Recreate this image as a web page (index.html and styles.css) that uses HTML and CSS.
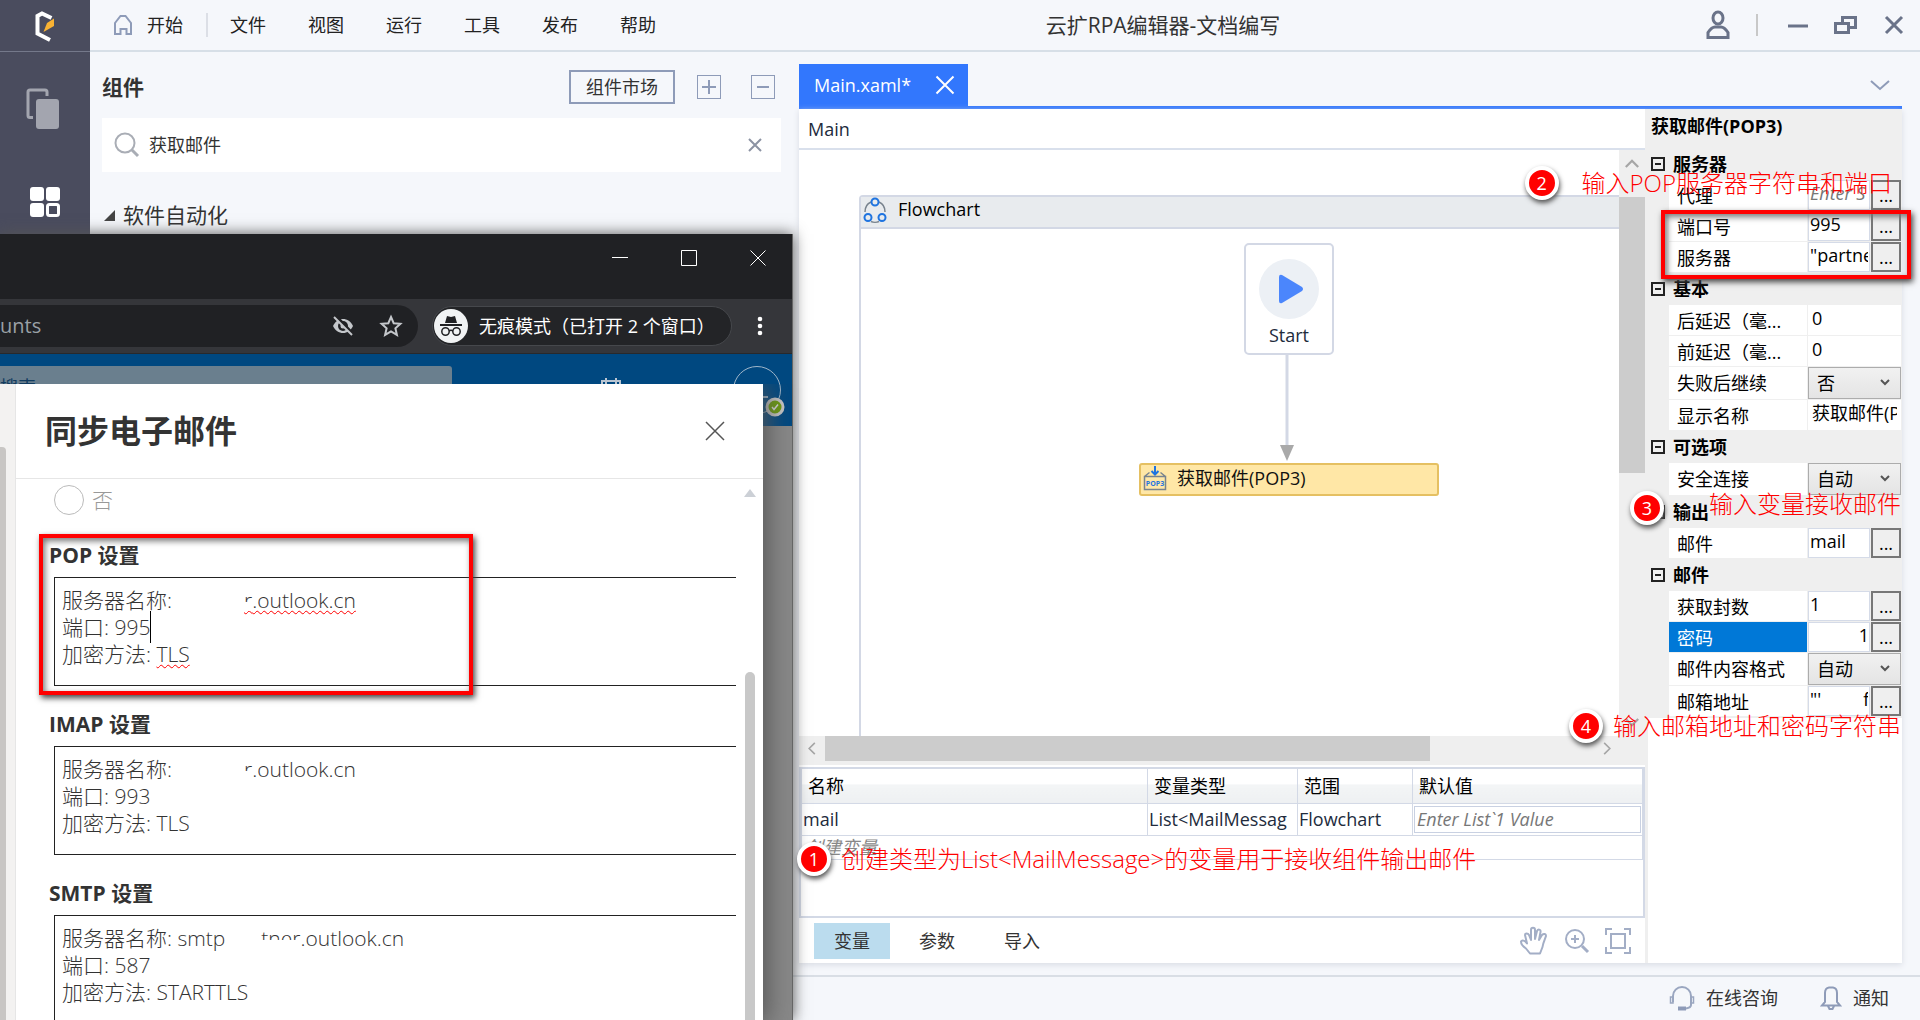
FILE: index.html
```html
<!DOCTYPE html>
<html lang="zh-CN">
<head>
<meta charset="utf-8">
<title>云扩RPA编辑器-文档编写</title>
<link rel="stylesheet" href="styles.css">
</head>
<body>
<div class="app">
  <aside class="rail">
    <div class="rail-logo">
      <svg width="22" height="34" viewBox="0 0 22 34"><path d="M17.500 8L8 3.500 3.500 6v17.500L16 30" fill="none" stroke="#fff" stroke-width="4"/><path d="M20 8.500V16L9.500 22l3.500-9z" fill="#f9b233"/></svg>
    </div>
    <button class="rail-btn" aria-label="文件">
      <svg width="34" height="42" viewBox="0 0 34 42"><path d="M7 29.500H4a2 2 0 0 1-2-2V4a2 2 0 0 1 2-2h15a2 2 0 0 1 2 2v4" fill="none" stroke="#a3a5af" stroke-width="3"/><rect x="10" y="11" width="23" height="30" rx="3" fill="#a3a5af"/></svg>
    </button>
    <button class="rail-btn" aria-label="组件">
      <svg width="32" height="32" viewBox="0 0 32 32"><g fill="#fff"><rect x="1" y="1" width="14" height="14" rx="3"/><rect x="17" y="1" width="14" height="14" rx="3"/><rect x="1" y="17" width="14" height="14" rx="3"/></g><rect x="18.500" y="18.500" width="11" height="11" rx="2" fill="none" stroke="#fff" stroke-width="3"/></svg>
    </button>
  </aside>

  <header class="topbar">
    <nav class="menu">
      <a class="menu-home" href="#">
        <svg width="20" height="22" viewBox="0 0 20 22"><path d="M2 9L7.500 2h5L18 9v11h-4.500v-5h-6v5H2z" fill="none" stroke="#8e9bb8" stroke-width="2"/></svg>
        开始</a>
      <a href="#">文件</a><a href="#">视图</a><a href="#">运行</a><a href="#">工具</a><a href="#">发布</a><a href="#">帮助</a>
    </nav>
    <h1 class="title">云扩RPA编辑器-文档编写</h1>
    <div class="win-tools">
      <button class="user" aria-label="用户"><svg width="24" height="30" viewBox="0 0 24 30"><ellipse cx="12" cy="8" rx="5" ry="6" fill="none" stroke="#6a7389" stroke-width="3"/><path d="M2 27.500v-5c2-3 5-5.500 7-5.500h6c2 0 5 2.500 7 5.500v5z" fill="none" stroke="#6a7389" stroke-width="3"/></svg></button>
      <button aria-label="最小化"><svg width="20" height="20" viewBox="0 0 20 20"><path d="M0 11h20" stroke="#6a7389" stroke-width="3"/></svg></button>
      <button aria-label="还原"><svg width="24" height="20" viewBox="0 0 24 20"><path d="M8.500 7V2.500h13v10H16M1.500 8.500h13v9h-13z" fill="none" stroke="#6a7389" stroke-width="3"/></svg></button>
      <button aria-label="关闭"><svg width="20" height="20" viewBox="0 0 20 20"><path d="M2 2l16 16M18 2L2 18" stroke="#6a7389" stroke-width="3"/></svg></button>
    </div>
  </header>

  <section class="components">
    <div class="comp-head">
      <h2>组件</h2>
      <button class="market">组件市场</button>
      <button class="sq" aria-label="展开"><svg width="16" height="16" viewBox="0 0 16 16"><path d="M1 8h14M8 1v14" stroke="#8e9bb8" stroke-width="2"/></svg></button>
      <button class="sq" aria-label="折叠"><svg width="16" height="16" viewBox="0 0 16 16"><path d="M2 8h12" stroke="#8e9bb8" stroke-width="2"/></svg></button>
    </div>
    <div class="search">
      <svg width="26" height="26" viewBox="0 0 26 26"><circle cx="11" cy="11" r="9.500" fill="none" stroke="#a9adb5" stroke-width="2"/><path d="M18 18l6 6" stroke="#a9adb5" stroke-width="3"/></svg>
      <input type="text" value="获取邮件" aria-label="搜索组件">
      <button aria-label="清除"><svg width="16" height="16" viewBox="0 0 16 16"><path d="M2 2l12 12M14 2L2 14" stroke="#8c93a3" stroke-width="2"/></svg></button>
    </div>
    <div class="tree"><svg width="11" height="11" viewBox="0 0 11 11"><path d="M11 0v11H0z" fill="#444"/></svg>软件自动化</div>
  </section>

  <main class="editor">
    <div class="tabs">
      <div class="tab">Main.xaml*<button aria-label="关闭标签"><svg width="20" height="20" viewBox="0 0 20 20"><path d="M1.500 1.500l17 17M18.500 1.500l-17 17" stroke="#fff" stroke-width="2"/></svg></button></div>
      <button class="tabs-more" aria-label="更多"><svg width="20" height="11" viewBox="0 0 20 11"><path d="M1 1l9 8 9-8" fill="none" stroke="#8e9bb8" stroke-width="2"/></svg></button>
    </div>
    <div class="workspace">
      <div class="designer">
        <div class="crumb">Main</div>
        <div class="canvas">
          <div class="view">
            <div class="flow">
              <div class="flow-head"><svg width="24" height="26" viewBox="0 0 24 26"><path d="M8 5c-3.500 1.500-6 5-6 10M16 5c3.500 1.500 6 5 6 10M8 24.500c2 1 6 1 8 0" fill="none" stroke="#78838e" stroke-width="1.500"/><g fill="none" stroke="#1f74e0" stroke-width="2"><circle cx="12" cy="5" r="3.500"/><circle cx="5" cy="20.500" r="3.500"/><circle cx="19" cy="20.500" r="3.500"/></g></svg>Flowchart</div>
              <div class="node-start"><svg width="60" height="60" viewBox="0 0 60 60"><circle cx="30" cy="30" r="30" fill="#ecf0f5"/><path d="M20 18q0-3 3-2l20 12q2 2 0 4L23 44q-3 1-3-2z" fill="#4b86fc"/></svg>Start</div>
              <svg class="arrow" width="16" height="107" viewBox="0 0 16 107"><path d="M8 0v92" stroke="#d3d8e5" stroke-width="3"/><path d="M1 90h14L8 106z" fill="#a9a9a9"/></svg>
              <div class="node-pop"><svg width="24" height="26" viewBox="0 0 24 26"><path d="M1.500 10.500h21v13h-21zM1.500 10.500l5-4M22.500 10.500l-5-4" fill="none" stroke="#78838e" stroke-width="1.500"/><path d="M12 0v8M8.500 5L12 8.500 15.500 5" fill="none" stroke="#1f74e0" stroke-width="2"/><text x="12" y="20" font-size="7" font-weight="700" text-anchor="middle" fill="#1f74e0">POP3</text></svg>获取邮件(POP3)</div>
            </div>
          </div>
          <div class="vbar"><svg width="14" height="9" viewBox="0 0 18 11"><path d="M1 10l8-8 8 8" fill="none" stroke="#a6a6a6" stroke-width="3"/></svg><i></i><svg width="14" height="9" viewBox="0 0 18 11"><path d="M1 1l8 8 8-8" fill="none" stroke="#a6a6a6" stroke-width="3"/></svg></div>
        </div>
        <div class="hbar"><svg width="8" height="13" viewBox="0 0 9 16"><path d="M8 1L1 8l7 7" fill="none" stroke="#a6a6a6" stroke-width="2"/></svg><i></i><svg width="8" height="13" viewBox="0 0 9 16"><path d="M1 1l7 7-7 7" fill="none" stroke="#a6a6a6" stroke-width="2"/></svg></div>
        <div class="vars">
          <table>
            <thead><tr><th class="c-name">名称</th><th class="c-type">变量类型</th><th class="c-scope">范围</th><th>默认值</th></tr></thead>
            <tbody>
              <tr><td>mail</td><td>List&lt;MailMessag</td><td>Flowchart</td><td class="c-def"><input type="text" placeholder="Enter List`1 Value" aria-label="默认值"></td></tr>
              <tr class="new"><td colspan="4">创建变量</td></tr>
            </tbody>
          </table>
        </div>
        <div class="bottom">
          <button class="on">变量</button><button>参数</button><button>导入</button>
          <div class="tools">
            <button aria-label="平移"><svg width="30" height="30" viewBox="0 0 30 30"><path d="M11 27.500l-4-5c-3-2-5-5-5-7 1-2 4-1 6 2L6 9c0-2 3-2 4 0l2 5V4c0-3 4-3 4 0v9l2-8c1-2 4-2 3.500 1L20 14l3-5c2-2 4-1 4 1-1 3-3 7-3.500 11L21 27.500z" fill="none" stroke="#a3aec6" stroke-width="2" stroke-linejoin="round"/></svg></button>
            <button aria-label="放大"><svg width="26" height="28" viewBox="0 0 26 28"><circle cx="11" cy="12" r="9" fill="none" stroke="#a3aec6" stroke-width="2"/><path d="M7 12h8M11 8v8" stroke="#a3aec6" stroke-width="2"/><path d="M18 19l6 6" stroke="#a3aec6" stroke-width="3"/></svg></button>
            <button aria-label="适应屏幕"><svg width="26" height="26" viewBox="0 0 26 26"><path d="M1 7V1h6M19 1h6v6M25 19v6h-6M7 25H1v-6M6 6h14v14H6z" fill="none" stroke="#a3aec6" stroke-width="2"/></svg></button>
          </div>
        </div>
        <div class="note note-1"><b>1</b>创建类型为List&lt;MailMessage&gt;的变量用于接收组件输出邮件</div>
      </div>

      <aside class="props">
        <div class="grid-box">
          <h3>获取邮件(POP3)</h3>
          <h4><button aria-label="折叠服务器"></button>服务器</h4>
          <div class="row"><label for="p1">代理</label><input id="p1" type="text" placeholder="Enter S"><button>...</button></div>
          <div class="row"><label for="p2">端口号</label><input id="p2" type="text" value="995"><button>...</button></div>
          <div class="row"><label for="p3">服务器</label><input id="p3" type="text" value='"partner'><button>...</button></div>
          <h4><button aria-label="折叠基本"></button>基本</h4>
          <div class="row plain"><label for="p4">后延迟（毫...</label><input id="p4" type="text" value="0"></div>
          <div class="row plain"><label for="p5">前延迟（毫...</label><input id="p5" type="text" value="0"></div>
          <div class="row pick"><label for="p6">失败后继续</label><select id="p6"><option>否</option></select></div>
          <div class="row plain"><label for="p7">显示名称</label><input id="p7" type="text" value="获取邮件(POP3)"></div>
          <h4><button aria-label="折叠可选项"></button>可选项</h4>
          <div class="row pick"><label for="p8">安全连接</label><select id="p8"><option>自动</option></select></div>
          <h4><button aria-label="折叠输出"></button>输出</h4>
          <div class="row"><label for="p9">邮件</label><input id="p9" type="text" value="mail"><button>...</button></div>
          <h4><button aria-label="折叠邮件"></button>邮件</h4>
          <div class="row"><label for="p10">获取封数</label><input id="p10" type="text" value="1"><button>...</button></div>
          <div class="row sel"><label for="p11">密码</label><input id="p11" class="end" type="text" value="1"><button>...</button></div>
          <div class="row pick"><label for="p12">邮件内容格式</label><select id="p12"><option>自动</option></select></div>
          <div class="row"><label for="p13">邮箱地址</label><input id="p13" type="text" value="&quot;'         f"><button>...</button></div>
        </div>
        <div class="note note-2"><b>2</b>输入POP服务器字符串和端口</div>
        <div class="note note-3"><b>3</b>输入变量接收邮件</div>
        <div class="note note-4"><b>4</b>输入邮箱地址和密码字符串</div>
        <div class="mark mark-server"></div>
      </aside>
    </div>
  </main>

  <footer class="status">
    <a href="#"><svg width="26" height="26" viewBox="0 0 26 26"><path d="M4 17V11c0-5 4-9 9-9s9 4 9 9v9c0 2-2 3-5 3.500" fill="none" stroke="#9aa6c0" stroke-width="2"/><path d="M4 12H1.500v6H4zM22 12h2.500v6H22z" fill="none" stroke="#9aa6c0" stroke-width="1.500"/><path d="M9 21.500h8v4H9z" fill="#8e9bb8"/></svg>在线咨询</a>
    <a href="#"><svg width="22" height="26" viewBox="0 0 22 26"><path d="M5 17V8q0-5 4-5.500h4q4 .5 4 5.500v9l3 3.500H2zM8 21l1.500 3h3L14 21" fill="none" stroke="#8e9bb8" stroke-width="2"/></svg>通知</a>
  </footer>
</div>

<section class="browser">
  <div class="b-title">
    <button aria-label="最小化"><svg width="16" height="16" viewBox="0 0 16 16"><path d="M0 7.500h16" stroke="#fff"/></svg></button>
    <button aria-label="最大化"><svg width="16" height="16" viewBox="0 0 16 16"><path d="M.5.500h15v15H.5z" fill="none" stroke="#fff"/></svg></button>
    <button aria-label="关闭"><svg width="16" height="16" viewBox="0 0 16 16"><path d="M.5.500l15 15M15.500.5l-15 15" stroke="#fff"/></svg></button>
  </div>
  <div class="b-bar">
    <div class="omni"><span>unts</span>
      <svg width="24" height="24" viewBox="0 0 24 24"><path d="M2 12c2-4.500 6-7 10-7s8 2.500 10 7c-2 4.500-6 7-10 7s-8-2.500-10-7z" fill="#c4c7cb"/><circle cx="12" cy="12" r="5" fill="#202124"/><circle cx="12" cy="12" r="2.500" fill="#c4c7cb"/><path d="M5 2l17 18" stroke="#202124" stroke-width="3"/><path d="M3 3l18 18" stroke="#c4c7cb" stroke-width="2"/></svg>
      <svg width="24" height="24" viewBox="0 0 24 24"><path d="M12 3l2.700 6.200 6.700.6-5 4.500 1.500 6.600-5.900-3.500-5.900 3.500 1.500-6.600-5-4.500 6.700-.6z" fill="none" stroke="#c4c7cb" stroke-width="2"/></svg>
    </div>
    <div class="incog"><svg width="34" height="34" viewBox="0 0 34 34"><circle cx="17" cy="17" r="17" fill="#f1f3f4"/><path d="M11 14l2-7 4 1 4-1 2 7zM6 15h22v2H6z" fill="#202124"/><g fill="none" stroke="#202124" stroke-width="1.500"><circle cx="11.500" cy="22.500" r="3.700"/><circle cx="22.500" cy="22.500" r="3.700"/><path d="M15 22q2-1.500 4 0"/></g></svg>无痕模式（已打开 2 个窗口）</div>
    <svg class="dots" width="6" height="20" viewBox="0 0 6 20"><g fill="#fff"><circle cx="3" cy="3" r="2.300"/><circle cx="3" cy="10" r="2.300"/><circle cx="3" cy="17" r="2.300"/></g></svg>
  </div>
  <div class="mailbar">
    <div class="mail-search">搜索</div>
    <svg class="cal" width="20" height="22" viewBox="0 0 20 22"><path d="M1 4h18v17H1zM5 1v6M15 1v6" fill="none" stroke="#b9c5d2" stroke-width="2"/></svg>
    <div class="avatar"><i></i><svg width="20" height="20" viewBox="0 0 20 20"><circle cx="10" cy="10" r="8" fill="#6b9c0c" stroke="#c8c8c8" stroke-width="3"/><path d="M7 10l2 2.500 4-5" fill="none" stroke="#ddd" stroke-width="1.500"/></svg></div>
  </div>
  <div class="page">
    <div class="side"><i></i></div>
    <div class="dialog">
      <div class="d-head"><h2>同步电子邮件</h2><button aria-label="关闭"><svg width="20" height="20" viewBox="0 0 20 20"><path d="M1 1l18 18M19 1L1 19" stroke="#555" stroke-width="1.500"/></svg></button></div>
      <div class="d-body">
        <label class="radio"><input type="radio" name="sync">否</label>
        <h3>POP 设置</h3>
        <div class="box">
          <p>服务器名称:<span class="host bad"><span class="faded">r</span>.outlook.cn</span></p>
          <p>端口: 995<span class="caret"></span></p>
          <p>加密方法: <span class="bad">TLS</span></p>
        </div>
        <h3>IMAP 设置</h3>
        <div class="box">
          <p>服务器名称:<span class="host"><span class="faded">r</span>.outlook.cn</span></p>
          <p>端口: 993</p>
          <p>加密方法: TLS</p>
        </div>
        <h3>SMTP 设置</h3>
        <div class="box">
          <p>服务器名称: smtp<span class="host host-smtp"><span class="faded">tner</span>.outlook.cn</span></p>
          <p>端口: 587</p>
          <p>加密方法: STARTTLS</p>
        </div>
        <svg class="up" width="12" height="8" viewBox="0 0 12 8"><path d="M6 0l6 8H0z" fill="#ccd0d6"/></svg>
        <i class="thumb"></i>
        <div class="mark mark-pop"></div>
      </div>
    </div>
  </div>
</section>
</body>
</html>
```
FILE: styles.css
```css
* { box-sizing: border-box; }
body {
  margin: 0;
  height: 100vh;
  overflow: hidden;
  position: relative;
  background: #f5f7fb;
  color: #333;
  font-family: "Open Sans", "Noto Sans CJK SC", sans-serif;
  font-size: 18px;
  line-height: 24px;
}
h1, h2, h3, h4, p { margin: 0; }
button { border: 0; padding: 0; background: none; font: inherit; color: inherit; }
input, select { font: inherit; color: inherit; margin: 0; min-width: 0; }
a { color: inherit; text-decoration: none; }
svg { flex: none; display: block; }

.app {
  height: 100%;
  display: grid;
  grid-template-columns: 90px 709px 1fr;
  grid-template-rows: 52px 1fr 45px;
}

/* left rail */
.rail {
  grid-row: 1 / 4;
  background: #4a4c5e;
  display: flex;
  flex-direction: column;
  align-items: center;
}
.rail-logo {
  width: 100%;
  height: 52px;
  padding-top: 10px;
  border-bottom: 1px solid #74788a;
  display: flex;
  justify-content: center;
}
.rail-btn { width: 100%; height: 93px; display: flex; align-items: center; justify-content: center; }
.rail-btn:nth-of-type(1) { margin-top: 10px; padding-right: 4px; }

/* top bar */
.topbar {
  grid-column: 2 / 4;
  border-bottom: 2px solid #d7dfe7;
  display: flex;
  align-items: center;
}
.menu { display: flex; gap: 42px; padding-left: 23px; color: #222; }
.menu-home {
  display: flex;
  align-items: center;
  gap: 14px;
  padding-right: 23px;
  margin-right: -20px;
  border-right: 2px solid #dcdfe6;
}
.title { flex: 1; text-align: center; font-size: 21px; font-weight: 400; padding-right: 36px; }
.win-tools { display: flex; align-items: center; gap: 26px; padding-right: 16px; }
.user { border-right: 2px solid #c8c8c8; padding-right: 26px; height: 22px; display: flex; align-items: center; margin-right: 4px; }

/* components */
.components { padding: 18px 18px 0 12px; }
.comp-head { display: flex; align-items: center; height: 34px; padding-right: 6px; }
.comp-head h2 { flex: 1; font-size: 21px; }
.market { width: 106px; height: 34px; border: 2px solid #8e9bb8; }
.sq {
  width: 24px;
  height: 24px;
  margin-left: 30px;
  border: 1px solid #8e9bb8;
  display: flex;
  align-items: center;
  justify-content: center;
}
.market + .sq { margin-left: 22px; }
.search {
  margin-top: 14px;
  height: 54px;
  padding: 0 18px 0 12px;
  background: #fff;
  display: flex;
  align-items: center;
  gap: 9px;
}
.search input { flex: 1; border: 0; padding: 0; background: none; }
.tree { margin-top: 31px; display: flex; align-items: center; gap: 8px; font-size: 21px; padding-left: 2px; }

/* editor */
.editor { display: flex; flex-direction: column; padding: 12px 18px 12px 0; min-width: 0; }
.tabs {
  height: 45px;
  border-bottom: 3px solid #3277fd;
  display: flex;
  align-items: stretch;
  justify-content: space-between;
}
.tab {
  width: 169px;
  padding: 0 13px 0 15px;
  background: #3277fd;
  color: #fff;
  display: flex;
  align-items: center;
  justify-content: space-between;
}
.tabs-more { padding-right: 12px; }
.workspace { flex: 1; display: flex; min-height: 0; box-shadow: 0 2px 6px #d9dce4; }
.designer { flex: 1; min-width: 0; display: flex; flex-direction: column; background: #fff; position: relative; }
.crumb { height: 41px; padding: 8px 9px; border-bottom: 2px solid #d9e0ec; color: #222b3c; }
.canvas { flex: 1; min-height: 0; display: flex; }
.view { flex: 1; min-width: 0; padding: 45px 0 0 60px; }
.flow { height: 100%; border: 2px solid #d3d8e5; border-width: 2px 0 0 2px; border-radius: 4px 0 0 0; position: relative; }
.flow-head {
  height: 32px;
  background: #e8ebee;
  border-bottom: 2px solid #d3d8e5;
  display: flex;
  gap: 11px;
  padding-left: 2px;
  color: #000;
}
.node-start {
  position: absolute;
  left: 383px;
  top: 46px;
  width: 90px;
  height: 112px;
  border: 2px solid #d3d8e5;
  border-radius: 5px;
  display: flex;
  flex-direction: column;
  align-items: center;
  gap: 4px;
  padding-top: 14px;
  color: #222b3c;
}
.arrow { position: absolute; left: 418px; top: 158px; }
.node-pop {
  position: absolute;
  left: 278px;
  top: 266px;
  width: 300px;
  height: 33px;
  border: 2px solid #e5c062;
  border-radius: 3px;
  background: #ffe7a6;
  display: flex;
  gap: 10px;
  padding: 1px 2px;
  color: #111;
}
.vbar {
  width: 26px;
  background: #efefef;
  display: flex;
  flex-direction: column;
  align-items: center;
  padding: 9px 0;
}
.vbar i { width: 26px; height: 276px; margin: 29px 0 auto; background: #ccc; }
.hbar {
  height: 29px;
  background: #efefef;
  display: flex;
  align-items: center;
  padding: 0 34px 4px 9px;
}
.hbar i { flex: 0 1 605px; height: 25px; margin: 0 auto 0 9px; background: #ccc; }

.vars { height: 151px; margin: 2px 0 0 0; border: 2px solid #d3d9e6; }
.vars table { width: 100%; table-layout: fixed; border-collapse: collapse; }
.vars th {
  height: 34px;
  padding: 0 6px;
  text-align: left;
  font-weight: 400;
  color: #000;
  background: linear-gradient(#fff 45%, #f3f5f6 46%, #eef0f2);
  border: 1px solid #d3d9e6;
  border-top: 0;
}
.vars td { height: 32px; padding: 0 1px; border: 1px solid #d3d9e6; overflow: hidden; white-space: nowrap; color: #222b3c; }
.vars .new td { height: 24px; padding: 0 3px; font-style: italic; color: #888; line-height: 20px; }
.c-name { width: 346px; }
.c-type { width: 150px; }
.c-scope { width: 115px; }
.vars input { width: 100%; height: 27px; padding: 0 2px; border: 1px solid #c9d1e2; font-style: italic; display: block; }
::placeholder { color: #777; opacity: 1; font-style: italic; }
.bottom { height: 45px; display: flex; align-items: center; padding: 0 14px 0 15px; }
.bottom > button { width: 76px; height: 36px; margin-right: 9px; }
.bottom .on { background: #bbdcee; }
.tools { margin-left: auto; display: flex; gap: 15px; align-items: center; }

/* property grid */
.props { width: 257px; background: linear-gradient(90deg, #efefef 3px, #fff 3px); position: relative; color: #000; }
.grid-box { background: #efefef; padding-bottom: 1px; }
.grid-box h3 { height: 39px; padding: 5px 6px; font-size: 18px; }
.grid-box h4 { height: 32px; display: flex; align-items: center; gap: 8px; padding-left: 6px; font-size: 18px; }
.grid-box h4 button {
  width: 14px;
  height: 14px;
  border: 2px solid #222;
  background: linear-gradient(#222, #222) center / 6px 2px no-repeat;
}
.row { height: 31px; margin: 0 1px 0 24px; display: grid; grid-template-columns: 138px 62px 30px; gap: 1px; padding-bottom: 1px; }
.row.pick { height: 33px; }
.row.plain, .row.pick { grid-template-columns: 138px 93px; }
.row label { background: #fff; padding: 5px 8px 0; white-space: nowrap; line-height: 23px; }
.row.sel label { background: #0078d7; color: #fff; }
.row input { width: 100%; padding: 0 1px 4px; border: 1px solid #d5dbe8; background: #fff; }
.row.plain input { padding: 0 4px 4px; border: 0; }
.row .end { text-align: right; padding-right: 0; }
.row button { border: 2px solid #777; background: #efefef; }
.row select {
  appearance: none;
  border: 1px solid #acacac;
  padding: 0 8px;
  color: #000;
  background: url("data:image/svg+xml,%3Csvg xmlns='http://www.w3.org/2000/svg' width='10' height='8'%3E%3Cpath d='M1 1l4 4 4-4' fill='none' stroke='%23555' stroke-width='2'/%3E%3C/svg%3E") right 10px top 11px no-repeat, linear-gradient(#f1f1f1, #e4e4e4);
}

/* annotations lying over the windows */
.note {
  position: absolute;
  display: flex;
  align-items: center;
  gap: 10px;
  color: #f00;
  font-size: 24px;
  font-weight: 300;
  line-height: 36px;
  white-space: nowrap;
  z-index: 3;
}
.note b {
  width: 34px;
  height: 34px;
  border-radius: 50%;
  border: 4px solid #fff;
  background: #f00;
  color: #fff;
  font-size: 18px;
  line-height: 26px;
  text-align: center;
  box-shadow: 1px 3px 5px #555;
}
.note-1 { left: -2px; bottom: 86px; z-index: 6; }
.note-2 { right: 10px; top: 56px; gap: 23px; }
.note-3 { right: 1px; top: 374px; gap: 45px; }
.note-3 b { margin-top: 8px; }
.note-4 { right: 1px; top: 599px; }
.mark { position: absolute; border: 4px solid #f00; box-shadow: 2px 3px 6px #444, inset 2px 3px 6px #777; z-index: 3; }
.mark-server { right: -9px; top: 101px; width: 250px; height: 69px; }

/* status bar */
.status {
  grid-column: 2 / 4;
  border-top: 2px solid #d9dee5;
  display: flex;
  align-items: center;
  justify-content: flex-end;
  gap: 42px;
  padding: 0 31px 2px 0;
}
.status a { display: flex; align-items: center; gap: 11px; }

/* browser window over the app */
.browser {
  position: absolute;
  left: 0;
  top: 234px;
  bottom: 0;
  width: 793px;
  display: flex;
  flex-direction: column;
  background: #888;
  box-shadow: 0 0 14px #555;
  border-right: 1px solid #666;
  z-index: 1;
}
.b-title { height: 65px; background: #202124; display: flex; justify-content: flex-end; gap: 53px; padding: 16px 26px 0 0; align-items: flex-start; }
.b-bar { height: 55px; background: #35363a; border-bottom: 1px solid #28292c; display: flex; align-items: center; gap: 14px; }
.omni {
  width: 418px;
  height: 42px;
  border-radius: 0 21px 21px 0;
  background: #202124;
  color: #9aa0a6;
  font-size: 20px;
  display: flex;
  align-items: center;
  gap: 24px;
  padding-right: 15px;
}
.omni span { flex: 1; }
.incog {
  width: 300px;
  height: 40px;
  border: 1px solid #46484c;
  border-radius: 20px;
  background: #232427;
  color: #fff;
  display: flex;
  align-items: center;
  gap: 11px;
  padding-left: 1px;
  white-space: nowrap;
}
.dots { margin-left: 11px; }
.mailbar { height: 72px; background: #004880; display: flex; align-items: flex-start; padding-top: 12px; }
.mail-search { width: 452px; height: 42px; border-radius: 0 3px 0 0; background: #6a7f8e; color: #123c60; padding-top: 9px; }
.cal { margin: 11px 0 0 149px; }
.avatar { margin-left: 112px; width: 48px; height: 48px; border: 1px solid #9fb6ca; border-radius: 50%; position: relative; }
.avatar i { position: absolute; left: 28px; top: 29px; width: 6px; height: 2px; background: #9fb6ca; }
.avatar svg { position: absolute; right: -5px; bottom: -4px; }
.page { flex: 1; min-height: 0; margin-top: -42px; display: flex; z-index: 1; }
.side { width: 15px; background: #f3f2f1; padding-top: 63px; }
.side i { display: block; width: 6px; height: 100%; border-radius: 0 4px 0 0; background: #c8c6c4; }
.dialog { width: 748px; background: #fff; box-shadow: 4px 4px 24px #555; border-left: 1px solid #e6e6e6; display: flex; flex-direction: column; color: #333; clip-path: inset(0 -40px 0 0); }
.d-head { height: 95px; flex: none; border-bottom: 1px solid #e6e6e6; display: flex; align-items: center; justify-content: space-between; padding: 0 38px 0 29px; }
.d-head h2 { font-size: 32px; line-height: 40px; }
.d-body { flex: 1; min-height: 0; position: relative; overflow: hidden; padding: 6px 27px 0 33px; font-size: 21px; line-height: 27px; }
.radio { display: flex; align-items: center; gap: 8px; height: 30px; padding-left: 5px; color: #999; font-weight: 300; }
.radio input { appearance: none; width: 30px; height: 30px; margin: 0; border: 1px solid #bbb; border-radius: 50%; }
.d-body h3 { font-size: 21px; line-height: 27px; margin: 27px 0 8px; }
.d-body .box { height: 109px; border: 1px solid #222; border-right: 0; margin-left: 5px; padding: 9px 7px; font-weight: 300; }
.box p { white-space: nowrap; }
.d-body .box + h3 { margin-top: 25px; }
.host { margin-left: 72px; }
.host-smtp { margin-left: 36px; }
.bad { text-decoration: underline wavy #f00 1px; text-underline-offset: 2px; text-decoration-skip-ink: none; }
.faded { position: relative; }
.faded::after { content: ""; position: absolute; left: -1px; right: 0; top: 16px; height: 9px; background: #fff; }
.caret { border-left: 1px solid #000; padding: 2px 0; }
.up { position: absolute; right: 7px; top: 10px; }
.thumb { position: absolute; right: 8px; top: 193px; bottom: 0; width: 10px; border-radius: 5px 5px 0 0; background: #c8c8c8; }
.mark-pop { left: 23px; top: 55px; width: 434px; height: 161px; }
```
